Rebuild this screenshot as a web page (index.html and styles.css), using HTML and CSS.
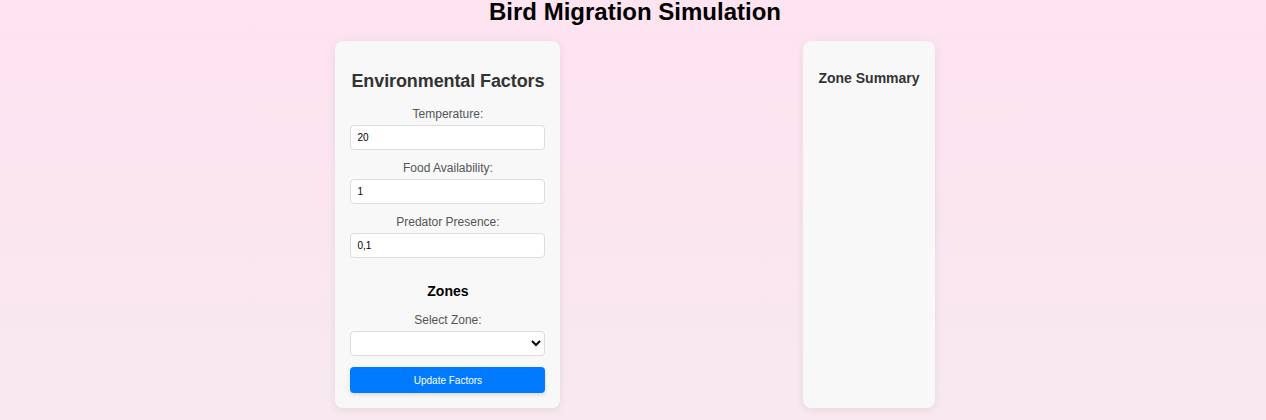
FILE: index.html
```html
<!DOCTYPE html>
<html lang="en">
<head>
<meta charset="utf-8">
<title>Bird Migration Simulation</title>
<link rel="stylesheet" href="styles.css">
</head>
<body>
<h1 class="title">Bird Migration Simulation</h1>
<div class="layout">
  <div class="panel controls">
    <h2 class="panel-title">Environmental Factors</h2>
    <label class="field-label" for="temp">Temperature:</label>
    <input class="field" id="temp" type="text" value="20">
    <label class="field-label" for="food">Food Availability:</label>
    <input class="field" id="food" type="text" value="1">
    <label class="field-label" for="pred">Predator Presence:</label>
    <input class="field" id="pred" type="text" value="0,1">
    <h3 class="section-title">Zones</h3>
    <label class="field-label" for="zone">Select Zone:</label>
    <select class="field select" id="zone"></select>
    <button class="btn" type="button">Update Factors</button>
  </div>
  <div class="map"></div>
  <div class="panel summary">
    <h3 class="summary-title">Zone Summary</h3>
  </div>
</div>
</body>
</html>
```
FILE: styles.css
```css
html, body {
  height: 100%;
}
body {
  margin: 0;
  font-family: "Liberation Sans", Arial, sans-serif;
  font-size: 12px;
  background: linear-gradient(180deg, #fee3f0 0%, #f8e9f0 100%);
  color: #000;
  overflow: hidden;
}
.title {
  font-size: 24px;
  font-weight: bold;
  text-align: center;
  margin: -2px 0 15px 4px;
  line-height: 28px;
}
.layout {
  display: flex;
  justify-content: center;
  align-items: stretch;
  gap: 20px;
  padding-left: 4px;
}
.panel {
  background: #f8f8f8;
  border-radius: 8px;
  box-shadow: 0 2px 10px rgba(0, 0, 0, 0.08);
  padding: 15px;
  text-align: center;
}
.controls {
  width: 195px;
  display: flex;
  flex-direction: column;
}
.map {
  width: 203px;
}
.panel-title {
  font-size: 18px;
  font-weight: bold;
  color: #333;
  margin: 15px -10px;
  line-height: 21px;
  white-space: nowrap;
  letter-spacing: -0.1px;
}
.field-label {
  display: block;
  color: #555;
  font-size: 12px;
  line-height: 14px;
  margin-bottom: 4px;
}
.field {
  box-sizing: border-box;
  width: 195px;
  height: 25px;
  border: 1px solid #ddd;
  border-radius: 4px;
  background: #fff;
  padding: 0 6px;
  font-family: "Liberation Sans", Arial, sans-serif;
  font-size: 10px;
  color: #000;
  margin: 0 0 11px;
}
.select {
  padding: 0 4px;
}
.section-title {
  font-size: 14px;
  font-weight: bold;
  margin: 14px 0;
  line-height: 16px;
}
.btn {
  width: 195px;
  height: 26px;
  border: none;
  border-radius: 4px;
  background: #007bff;
  color: #fff;
  font-family: "Liberation Sans", Arial, sans-serif;
  font-size: 10px;
  box-shadow: 0 2px 4px rgba(0, 0, 0, 0.12);
  cursor: pointer;
}
.summary {
  display: flex;
  flex-direction: column;
}
.summary-title {
  font-size: 14px;
  font-weight: bold;
  color: #333;
  margin: 14px 0;
  line-height: 16px;
  white-space: nowrap;
}
```
